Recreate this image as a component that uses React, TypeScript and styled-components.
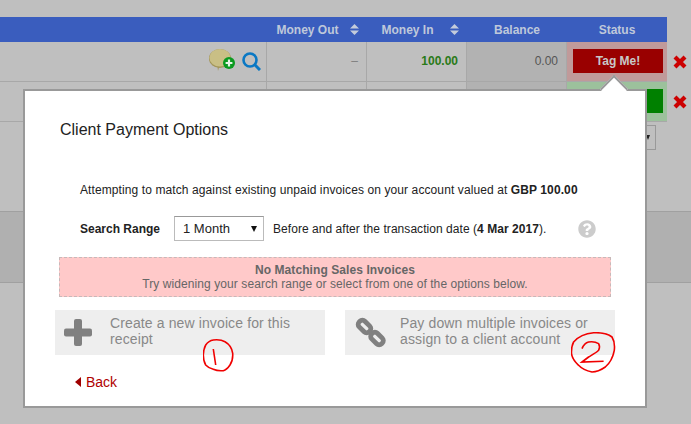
import React from 'react';
import styled, { createGlobalStyle } from 'styled-components';
import { FaQuestionCircle } from 'react-icons/fa';

const GlobalStyle = createGlobalStyle`
  html, body {
    margin: 0;
    padding: 0;
    background: #bfbfbf;
  }
  * {
    box-sizing: border-box;
  }
`;

const SortArrows = () => (
  <SortSvg width="9" height="11" viewBox="0 0 9 11">
    <path d="M4.5 0 L9 4.5 L0 4.5 Z M0 6.5 L9 6.5 L4.5 11 Z" fill="#c3cbdb" />
  </SortSvg>
);

const CommentAddIcon = () => (
  <BubbleSvg width="26" height="22" viewBox="0 0 26 22">
    <path d="M9 22 L8.5 18 L5 17 L11 15 Z" fill="#a3965a" />
    <ellipse cx="11" cy="9.5" rx="11" ry="9.5" fill="#a3965a" />
    <ellipse cx="11" cy="8.8" rx="10.6" ry="8.8" fill="#c9bf85" />
    <circle cx="20" cy="14" r="6" fill="#0a9a20" />
    <path d="M20 10.6 V17.4 M16.6 14 H23.4" stroke="#e8f4e8" strokeWidth="2.2" />
  </BubbleSvg>
);

const SearchIcon = () => (
  <MagnifierSvg width="19" height="19" viewBox="0 0 19 19" fill="none">
    <circle cx="8" cy="8" r="6.5" stroke="#0a78c4" strokeWidth="2.6" />
    <path d="M12.8 12.8 L18 18" stroke="#0a78c4" strokeWidth="3" />
  </MagnifierSvg>
);

const CrossIcon = () => (
  <svg width="14" height="14" viewBox="0 0 14 14">
    <path d="M2 2 L12 12 M12 2 L2 12" stroke="#cc0000" strokeWidth="4.2" />
  </svg>
);

const PlusIcon = () => (
  <svg width="28" height="27" viewBox="0 0 28 27" fill="#808080">
    <rect x="10" y="0" width="8" height="27" rx="2" />
    <rect x="0" y="9.5" width="28" height="8" rx="2" />
  </svg>
);

const ChainIcon = () => (
  <ChainSvg width="32" height="31" viewBox="0 0 32 31" fill="none">
    <rect x="2.5" y="5.5" width="14" height="8" rx="3.5" transform="rotate(45 9.5 9.5)" stroke="#808080" strokeWidth="4.8" />
    <rect x="15" y="17.5" width="14" height="8" rx="3.5" transform="rotate(45 22 21.5)" stroke="#808080" strokeWidth="4.8" />
  </ChainSvg>
);

const NoteOne = () => (
  <NoteSvg $left={178} $top={248} width="32" height="34" viewBox="0 0 32 34" fill="none">
    <path
      d="M10.3 1 C15 0.5 19 1 22 2.7 C26 5 29 9 29.7 14.3 C30 19 29 23 27 26 C25 29 23 31 20.3 31.7 C17 32 13 31.5 10.3 30.3 C7 29.5 4.5 28 2.7 26 C1 23 0.3 19 0.3 16 C0.5 12 1 9 2.7 6 C4.5 3.5 7 1.5 10.3 1 Z"
      stroke="#f00000"
      strokeWidth="1.6"
    />
    <path d="M10.3 10 L12.7 26" stroke="#f00000" strokeWidth="1.6" />
  </NoteSvg>
);

const NoteTwo = () => (
  <NoteSvg $left={546} $top={241} width="45" height="42" viewBox="0 0 45 42" fill="none">
    <path
      d="M22.6 0.8 C29 0.5 37 2 41 5 C43.5 9 43.8 14 43.3 18.3 C42 25 39 31 34.3 35 C30 38 25 40 21 40 C16 39 11 37 7.6 33.3 C4 30 1 26 0.5 21.6 C0.3 17 1 13 2.6 10 C7 5 15 1.5 22.6 0.8 Z"
      stroke="#f00000"
      strokeWidth="1.6"
    />
    <path
      d="M11 16.6 C12.5 13 15 10.5 17.6 10 C21 9.5 25 10 27.6 11.6 C29 14 28.5 16.5 27.6 18.3 C25 21 21 23 17.6 25 C15 27 13 28.5 11 30 L32.6 29.3"
      stroke="#f00000"
      strokeWidth="1.6"
    />
  </NoteSvg>
);

const App = () => {
  return (
    <Page>
      <GlobalStyle />
      <HeaderRow>
        <HeadCell />
        <HeadCell>
          <SortLabel>Money Out</SortLabel>
          <SortArrows />
        </HeadCell>
        <HeadCell>
          <SortLabel>Money In</SortLabel>
          <SortArrows />
        </HeadCell>
        <HeadCell>
          <CenterLabel>Balance</CenterLabel>
        </HeadCell>
        <HeadCell>
          <CenterLabel>Status</CenterLabel>
        </HeadCell>
      </HeaderRow>

      <Row>
        <DescCell>
          <CommentAddIcon />
          <SearchIcon />
        </DescCell>
        <Cell>
          <Dash>–</Dash>
        </Cell>
        <Cell>
          <MoneyIn>100.00</MoneyIn>
        </Cell>
        <Cell $shade>
          <Balance>0.00</Balance>
        </Cell>
        <StatusCell $bg="#c09a9a">
          <StatusButton $bg="#990000">Tag Me!</StatusButton>
        </StatusCell>
        <RemoveCell>
          <CrossIcon />
        </RemoveCell>
      </Row>

      <Row>
        <DescCell />
        <Cell />
        <Cell />
        <Cell $shade />
        <StatusCell $bg="#9cc19c">
          <StatusButton $bg="#008000" />
        </StatusCell>
        <RemoveCell>
          <CrossIcon />
        </RemoveCell>
      </Row>

      <PagerRow>
        <PagerSelect />
      </PagerRow>
      <Band />

      <Modal>
        <Pointer />
        <Title>Client Payment Options</Title>
        <Intro>
          Attempting to match against existing unpaid invoices on your account valued at <b>GBP 100.00</b>
        </Intro>
        <SearchRow>
          <SearchLabel>Search Range</SearchLabel>
          <SelectWrap>
            <RangeSelect defaultValue="1 Month">
              <option>1 Month</option>
            </RangeSelect>
          </SelectWrap>
          <RangeNote>
            Before and after the transaction date (<b>4 Mar 2017</b>).
          </RangeNote>
          <HelpIcon>
            <FaQuestionCircle size={18} color="#cccccc" />
          </HelpIcon>
        </SearchRow>
        <Alert>
          <b>No Matching Sales Invoices</b>
          <br />
          Try widening your search range or select from one of the options below.
        </Alert>
        <Options>
          <Option>
            <OptionIcon>
              <PlusIcon />
            </OptionIcon>
            Create a new invoice for this receipt
          </Option>
          <Option>
            <OptionIcon>
              <ChainIcon />
            </OptionIcon>
            Pay down multiple invoices or assign to a client account
          </Option>
        </Options>
        <BackLink href="#">
          <BackCaret />
          Back
        </BackLink>
        <NoteOne />
        <NoteTwo />
      </Modal>
    </Page>
  );
};

export default App;

const Page = styled.div`
  position: relative;
  width: 691px;
  height: 424px;
  padding-top: 17px;
  overflow: hidden;
  background: #bfbfbf;
  font-family: 'Liberation Sans', Arial, sans-serif;
  font-size: 12px;
`;

const HeaderRow = styled.div`
  display: grid;
  grid-template-columns: 267px repeat(4, 100px);
  width: 667px;
  height: 25px;
  background: #3a5dbe;
`;

const HeadCell = styled.div`
  display: flex;
  align-items: center;
  padding-right: 8px;
  color: #bfc8da;
  font-weight: bold;
`;

const SortLabel = styled.span`
  width: 81px;
  text-align: center;
`;

const SortSvg = styled.svg`
  margin-left: 2px;
`;

const CenterLabel = styled.span`
  flex: 1;
  margin-right: -8px;
  text-align: center;
`;

const Row = styled.div`
  display: grid;
  grid-template-columns: 267px repeat(4, 100px) 24px;
  height: 40px;
`;

const Cell = styled.div<{ $shade?: boolean }>`
  display: flex;
  align-items: center;
  justify-content: flex-end;
  padding: 0 8px 2px 0;
  border-right: 1px solid #a8a8a8;
  border-bottom: 1px solid #a8a8a8;
  background: ${(p) => (p.$shade ? '#b2b2b2' : '#bfbfbf')};
`;

const DescCell = styled(Cell)`
  gap: 7px;
  padding-right: 5px;
`;

const BubbleSvg = styled.svg`
  margin-top: -2px;
`;

const MagnifierSvg = styled.svg`
  margin-top: 2px;
`;

const ChainSvg = styled.svg`
  margin-left: 6px;
`;

const Dash = styled.span`
  color: #808080;
`;

const MoneyIn = styled.span`
  color: #2a7a18;
  font-weight: bold;
`;

const Balance = styled.span`
  color: #555555;
`;

const StatusCell = styled.div<{ $bg: string }>`
  display: flex;
  align-items: flex-start;
  justify-content: center;
  padding: 7px 4px 0 6px;
  border-bottom: 1px solid #a8a8a8;
  background: ${(p) => p.$bg};
`;

const StatusButton = styled.div<{ $bg: string }>`
  width: 100%;
  height: 24px;
  background: ${(p) => p.$bg};
  color: #c8c8c8;
  font-weight: bold;
  line-height: 24px;
  text-align: center;
`;

const RemoveCell = styled.div`
  display: flex;
  align-items: center;
  justify-content: center;
  padding-left: 2px;
`;

const PagerRow = styled.div`
  display: flex;
  justify-content: flex-end;
  height: 89px;
  padding: 3px 35px 0 0;
`;

const PagerSelect = styled.div`
  position: relative;
  width: 90px;
  height: 25px;
  border: 1px solid #999999;

  &::after {
    content: '';
    position: absolute;
    top: 9px;
    right: 5px;
    border-top: 5px solid #222222;
    border-right: 2.5px solid transparent;
    border-left: 2.5px solid transparent;
  }
`;

const Band = styled.div`
  height: 72px;
  border-top: 1px solid #a0a0a0;
  border-bottom: 1px solid #a0a0a0;
  background: #b0b0b0;
`;

const Modal = styled.div`
  position: absolute;
  top: 89px;
  left: 23px;
  width: 624px;
  height: 319px;
  padding: 29px 0 0 30px;
  border: 2px solid #999999;
  background: #ffffff;
  color: #222222;
`;

const Pointer = styled.div`
  position: absolute;
  top: -12px;
  left: 579px;
  width: 20px;
  height: 20px;
  border-top: 2px solid #999999;
  border-left: 2px solid #999999;
  background: #ffffff;
  transform: rotate(45deg);
`;

const Title = styled.h2`
  margin: 0 0 0 5px;
  font-size: 16px;
  font-weight: normal;
  line-height: 20px;
`;

const Intro = styled.p`
  margin: 42px 0 0 25px;
  letter-spacing: 0.1px;
  line-height: 16px;
`;

const SearchRow = styled.div`
  display: flex;
  align-items: center;
  width: 516px;
  height: 25px;
  margin: 18px 0 0 25px;
`;

const SearchLabel = styled.span`
  width: 94px;
  font-weight: bold;
`;

const SelectWrap = styled.div`
  position: relative;
  width: 90px;
  height: 25px;

  &::after {
    content: '';
    position: absolute;
    top: 10px;
    right: 7px;
    border-top: 6px solid #111111;
    border-right: 3.5px solid transparent;
    border-left: 3.5px solid transparent;
    pointer-events: none;
  }
`;

const RangeSelect = styled.select`
  width: 100%;
  height: 100%;
  padding: 0 0 0 8px;
  border: 1px solid #bbbbbb;
  border-top-color: #999999;
  border-radius: 0;
  appearance: none;
  background: #ffffff;
  color: #222222;
  font-family: inherit;
  font-size: 13px;
`;

const RangeNote = styled.span`
  margin-left: 9px;
  letter-spacing: 0.05px;
`;

const HelpIcon = styled.span`
  display: flex;
  margin-left: auto;
`;

const Alert = styled.div`
  width: 552px;
  height: 40px;
  margin: 16px 0 0 4px;
  padding-top: 5px;
  border: 1px dashed #c8b8b8;
  background: #ffc9c9;
  color: #666666;
  letter-spacing: 0.08px;
  line-height: 14px;
  text-align: center;
`;

const Options = styled.div`
  display: flex;
  gap: 20px;
  margin-top: 13px;
`;

const Option = styled.div`
  display: flex;
  align-items: center;
  width: 270px;
  height: 45px;
  padding: 0 20px 3px 0;
  background: #eeeeee;
  color: #888888;
  font-size: 14px;
  letter-spacing: 0.12px;
  line-height: 16px;
`;

const OptionIcon = styled.span`
  display: flex;
  flex: none;
  justify-content: center;
  width: 55px;
  padding: 3px 9px 0 0;
`;

const BackLink = styled.a`
  display: flex;
  align-items: center;
  width: fit-content;
  margin: 19px 0 0 20px;
  color: #b00000;
  font-size: 14px;
  line-height: 16px;
  text-decoration: none;
`;

const BackCaret = styled.span`
  width: 0;
  height: 0;
  margin-right: 5px;
  border-top: 5px solid transparent;
  border-right: 6px solid #a00000;
  border-bottom: 5px solid transparent;
`;

const NoteSvg = styled.svg<{ $left: number; $top: number }>`
  position: absolute;
  top: ${(p) => p.$top}px;
  left: ${(p) => p.$left}px;
`;
